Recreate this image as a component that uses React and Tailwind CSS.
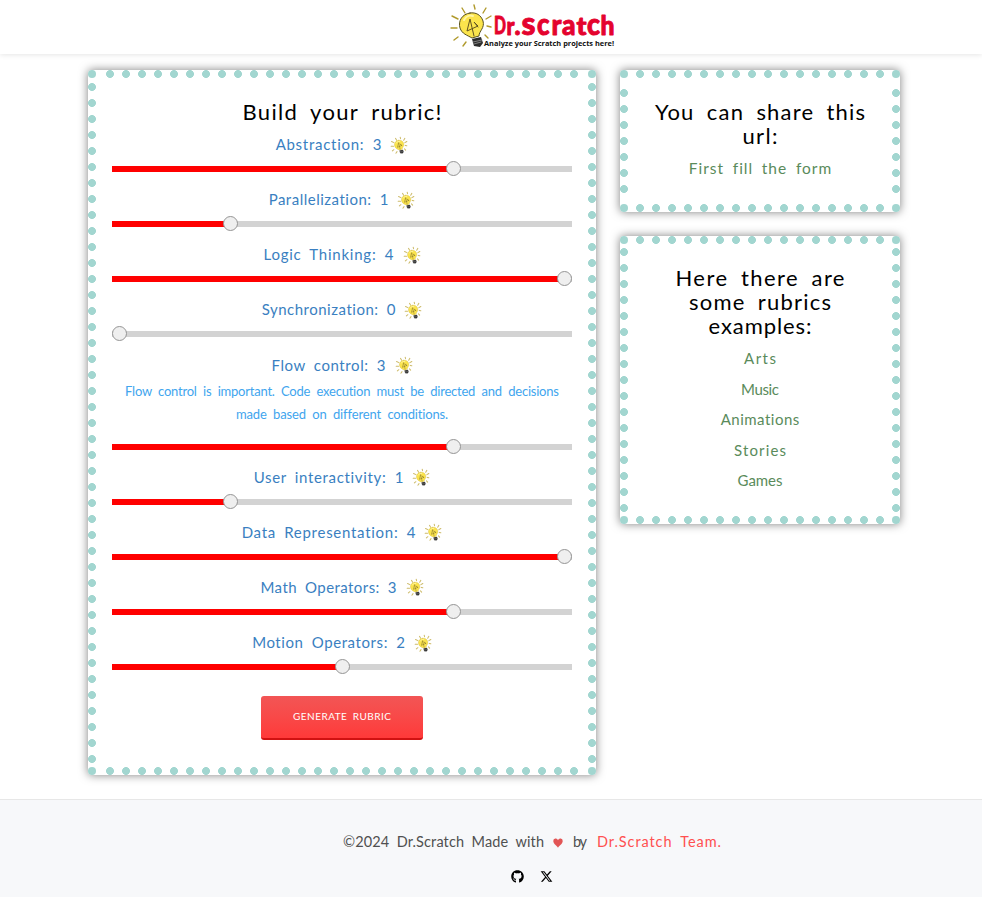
import { useLayoutEffect, useRef, useState } from "react";
import { FaGithub, FaXTwitter } from "react-icons/fa6";

// Spreads a line of text to the given width by adjusting its tracking.
function Line({ w, children, className = "" }) {
  const ref = useRef(null);
  const [spacing, setSpacing] = useState(0);
  useLayoutEffect(() => {
    const natural = ref.current.getBoundingClientRect().width;
    setSpacing((w - natural) / (children.length - 1));
  }, []);
  return (
    <span
      ref={ref}
      className={`inline-block whitespace-pre [word-spacing:0.25em] ${className}`}
      style={{ letterSpacing: spacing, marginRight: -spacing }}
    >
      {children}
    </span>
  );
}

function BulbShape({ simple = false }) {
  return (
    <g strokeLinecap="round" strokeLinejoin="round">
      <g stroke={simple ? "#cdbb69" : "#b09a2c"} strokeWidth={simple ? 2.6 : 1.4} fill="none">
        <path d="M25 5l1 4M37 8l-3 5M42 16l-5 3M42 27l-4-1M39 38l-3-3M13 8l3 5M3 16l6 3M2 28h6M5 40l4-3M14 46l3-4" />
      </g>
      <path
        d="M21 13c-8 1-12 8-10 15 2 6 7 7 12 10l7-2c0-5 6-8 4-15-2-6-7-9-13-8z"
        fill="#fbe44c"
        stroke={simple ? "#d3b943" : "#57501f"}
        strokeWidth="1"
      />
      <path d="M15 20c2-4 6-5 9-4" stroke="#fff6a5" strokeWidth="2" fill="none" />
      <path d="M25 36l-4-17-3 12 11-5-4-4 4 5" stroke="#615321" strokeWidth="1" fill="none" />
      <path d="M23 39l9-2 2 6-3 4-6-1z" fill="#2c2c2c" />
      <path d="M24 42l9-2M25 44l7-2" stroke="#a5a5a5" strokeWidth="0.7" />
    </g>
  );
}

const wordmark = [
  ["D", 45, 12, 34, 25],
  ["r", 57.5, 8, 34.5, 25],
  [".", 65.5, 6, 34.5, 26],
  ["s", 72.5, 14, 34.5, 33],
  ["c", 88, 12.5, 34.5, 30],
  ["r", 102.5, 10, 34.5, 29],
  ["a", 113, 13.5, 34.5, 28],
  ["t", 127.5, 10, 34.5, 25],
  ["c", 138, 13, 34.5, 30],
  ["h", 151.5, 14, 34.5, 26],
];

function Logo() {
  return (
    <svg className="h-[50px] w-[168px]" viewBox="0 0 168 50" role="img" aria-label="Dr.Scratch">
      <BulbShape />
      <g
        fill="#e4032e"
        stroke="#e4032e"
        strokeWidth="0.9"
        strokeLinejoin="round"
        className="font-[Lato,sans-serif] font-black"
      >
        {wordmark.map(([ch, x, w, y, size]) => (
          <text key={x} x={x} y={y} textLength={w} lengthAdjust="spacingAndGlyphs" fontSize={size}>
            {ch}
          </text>
        ))}
      </g>
      <text
        x="35"
        y="46"
        textLength="130"
        lengthAdjust="spacingAndGlyphs"
        fontSize="7.3"
        fill="#111"
        className="font-['Open_Sans',sans-serif] font-bold"
      >
        Analyze your Scratch projects here!
      </text>
    </svg>
  );
}

const dot = "absolute size-2 rounded-full bg-[#a2d6d0]";
const strip =
  "absolute bg-[radial-gradient(circle_at_center,#a2d6d0_3.6px,transparent_4.3px)]";

function Card({ className, insetX, insetY, children }) {
  return (
    <section
      className={`relative rounded bg-white text-center shadow-[0_0_10px_rgba(0,0,0,0.5)] ${className}`}
    >
      <i className={`${strip} top-0 h-2 bg-[length:16px_8px] ${insetX}`} />
      <i className={`${strip} bottom-0 h-2 bg-[length:16px_8px] ${insetX}`} />
      <i className={`${strip} left-0 w-2 bg-[length:8px_16px] ${insetY}`} />
      <i className={`${strip} right-0 w-2 bg-[length:8px_16px] ${insetY}`} />
      <i className={`${dot} left-0 top-0`} />
      <i className={`${dot} right-0 top-0`} />
      <i className={`${dot} bottom-0 left-0`} />
      <i className={`${dot} bottom-0 right-0`} />
      {children}
    </section>
  );
}

const skills = [
  { label: "Abstraction: 3", w: 106, value: 3 },
  { label: "Parallelization: 1", w: 120, value: 1 },
  { label: "Logic Thinking: 4", w: 130, value: 4 },
  { label: "Synchronization: 0", w: 134, value: 0 },
  { label: "Flow control: 3", w: 114, value: 3, tip: true },
  { label: "User interactivity: 1", w: 150, value: 1 },
  { label: "Data Representation: 4", w: 174, value: 4 },
  { label: "Math Operators: 3", w: 136, value: 3 },
  { label: "Motion Operators: 2", w: 153, value: 2 },
];

function Skill({ label, w, value, tip }) {
  const left = (value / 4) * 445;
  return (
    <div>
      <div className="flex h-6 items-center justify-center gap-[9px] text-[15px] leading-6 text-[#3a7fc1]">
        <Line w={w}>{label}</Line>
        <svg className="mt-px h-[18px] w-[18px]" viewBox="0 2 44 46">
          <BulbShape simple />
        </svg>
      </div>
      {tip && (
        <div className="flex h-[57px] flex-col items-center pt-[3px] text-[13px] leading-[23px] text-[#41a5ee]">
          <Line w={434}>Flow control is important. Code execution must be directed and decisions</Line>
          <Line w={212}>made based on different conditions.</Line>
        </div>
      )}
      <div className="flex h-[31.15px] items-start pt-[5px]">
        <div className="relative my-[5px] h-[6px] w-full bg-[#d3d3d3]">
          <div className="h-full bg-[#ff0000]" style={{ width: value ? left + 7 : 0 }} />
          <div
            className="absolute top-[-5px] size-[15px] rounded-full border border-[#959595] bg-[#efefef]"
            style={{ left }}
          />
        </div>
      </div>
    </div>
  );
}

const examples = [
  ["Arts", 32],
  ["Music", 38],
  ["Animations", 79],
  ["Stories", 52],
  ["Games", 45],
];

export default function App() {
  return (
    <div className="flex h-[897px] w-[982px] flex-col overflow-hidden bg-white font-[Lato,sans-serif]">
      <header className="h-[54px] shrink-0 pl-[449px] shadow-[0_1px_5px_rgba(0,0,0,0.1)]">
        <Logo />
      </header>

      <main className="flex h-[745px] shrink-0 items-start gap-6 pl-[88px] pt-4">
        <Card className="h-[705px] w-[508px] px-6 pt-[30px]" insetX="inset-x-[14px]" insetY="top-[9px] h-[688px]">
          <h1 className="h-8 text-[22px] leading-6 text-black">
            <Line w={199}>Build your rubric!</Line>
          </h1>
          {skills.map((s) => (
            <Skill key={s.label} {...s} />
          ))}
          <button className="mt-[11px] h-11 w-[162px] rounded-[3px] border-b-2 border-[#d01212] bg-linear-to-b from-[#f25555] to-[#ff3939] text-[10px] leading-[38px] text-white">
            <Line w={98} className="relative -top-px">GENERATE RUBRIC</Line>
          </button>
        </Card>

        <div className="flex flex-col gap-6">
          <Card className="h-[142px] w-[280px] pt-[30px]" insetX="inset-x-3" insetY="top-[15px] h-[112px]">
            <h2 className="flex flex-col items-center text-[22px] leading-6 text-black">
              <Line w={210}>You can share this</Line>
              <Line w={35}>url:</Line>
            </h2>
            <p className="mt-[5px] text-[15.5px] leading-[30px] text-[#5a8b5b]">
              <Line w={142}>First fill the form</Line>
            </p>
          </Card>

          <Card className="h-[288px] w-[280px] pt-[30px]" insetX="inset-x-3" insetY="top-[8px] h-[272px]">
            <h2 className="flex flex-col items-center text-[22px] leading-6 text-black">
              <Line w={169}>Here there are</Line>
              <Line w={142}>some rubrics</Line>
              <Line w={103}>examples:</Line>
            </h2>
            <ul className="mt-[5px] text-[15px] leading-[30.5px] text-[#5a8b5b]">
              {examples.map(([name, w]) => (
                <li key={name} className="flex justify-center">
                  <Line w={w}>{name}</Line>
                </li>
              ))}
            </ul>
          </Card>
        </div>
      </main>

      <footer className="h-[98px] shrink-0 border-t border-[#e7e7e7] bg-[#f7f8fa] pt-[30px]">
        <p className="flex h-6 items-center pl-[343px] text-[14.5px] leading-6 text-[#505050]">
          <Line w={201}>©2024 Dr.Scratch Made with</Line>
          <svg className="ml-[9px] mr-[10px] mt-px h-[10px] w-[10px]" viewBox="0 0 10 10">
            <path d="M5 9.8C4 8 .3 5.8.3 3A2.4 2.4 0 0 1 5 2.2 2.4 2.4 0 0 1 9.7 3C9.7 5.8 6 8 5 9.8z" fill="#e25555" />
          </svg>
          <Line w={14}>by</Line>
          <Line w={124} className="ml-[10px] text-[#ff5050]">Dr.Scratch Team.</Line>
        </p>
        <div className="flex gap-4 pl-[511px] pt-4 text-[13px] text-black">
          <FaGithub />
          <FaXTwitter />
        </div>
      </footer>
    </div>
  );
}
